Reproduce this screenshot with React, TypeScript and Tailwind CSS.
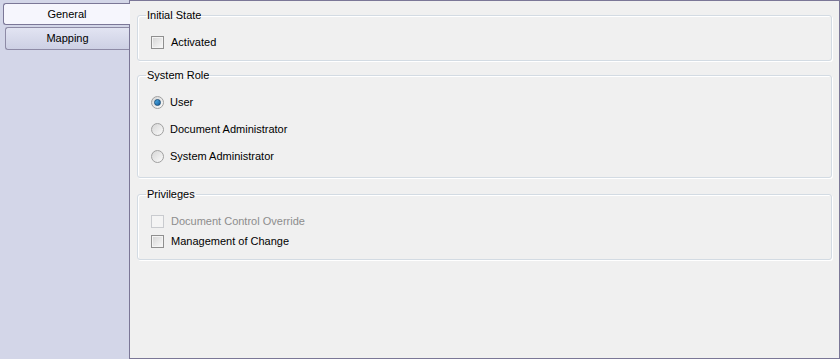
function Checkbox({ disabled = false }: { disabled?: boolean }) {
  return (
    <span
      className={
        disabled
          ? "w-[13px] h-[13px] border border-[#c9cbcf] bg-[#f4f4f4] shrink-0"
          : "w-[13px] h-[13px] border border-[#8f8f8f] bg-gradient-to-br from-[#d4d4d4] to-[#fafafa] shadow-[inset_0_0_0_1px_#f4f4f4] shrink-0"
      }
    />
  );
}

function Radio({ checked = false }: { checked?: boolean }) {
  return (
    <span className="w-[13px] h-[13px] rounded-full border border-[#a0a0a0] bg-gradient-to-br from-[#d6d6d6] to-[#fbfbfb] flex items-center justify-center shrink-0">
      {checked && (
        <span className="w-[7px] h-[7px] rounded-full bg-gradient-to-br from-[#54b2ea] to-[#0f5e9e] border border-[#1b4f7a]" />
      )}
    </span>
  );
}

function Group({
  title,
  className,
  children,
}: {
  title: string;
  className: string;
  children: React.ReactNode;
}) {
  return (
    <fieldset
      className={`border border-[#d3dbe3] rounded-[3px] shadow-[inset_1px_1px_0_#ffffff,1px_1px_0_#ffffff] ${className}`}
    >
      <legend className="ml-[8px] px-[1px] h-[14px] leading-[14px] text-black">
        {title}
      </legend>
      <div className="pl-[13px]">{children}</div>
    </fieldset>
  );
}

export default function App() {
  return (
    <div
      className="flex w-[840px] h-[359px] bg-[#d3d6e8] text-[11px] text-black"
      style={{ fontFamily: '"Liberation Sans", Arial, sans-serif' }}
    >
      <div className="w-[129px] shrink-0 flex flex-col">
        <div className="ml-[3px] mt-[3px] -mr-[1px] relative z-10 h-[22px] rounded-l-[3px] border border-r-0 border-[#7b7797] bg-[#f6f6fd] flex items-center justify-center">
          General
        </div>
        <div className="ml-[5px] mt-[2px] h-[23px] rounded-l-[3px] border border-r-0 border-[#8e8ba6] bg-gradient-to-b from-[#e2e4f2] to-[#cdd0e4] flex items-center justify-center">
          Mapping
        </div>
      </div>
      <div className="flex-1 border border-[#7b7797] bg-[#f0f0f0] pt-[7px] px-[7px] flex flex-col">
        <Group title="Initial State" className="h-[53px]">
          <div className="mt-[12px] h-[16px] flex items-center gap-[7px]">
            <Checkbox />
            <span>Activated</span>
          </div>
        </Group>
        <Group title="System Role" className="mt-[7px] h-[110px]">
          <div className="mt-[12px] flex flex-col gap-[11px]">
            <div className="h-[16px] flex items-center gap-[6px]">
              <Radio checked />
              <span>User</span>
            </div>
            <div className="h-[16px] flex items-center gap-[6px]">
              <Radio />
              <span>Document Administrator</span>
            </div>
            <div className="h-[16px] flex items-center gap-[6px]">
              <Radio />
              <span>System Administrator</span>
            </div>
          </div>
        </Group>
        <Group title="Privileges" className="mt-[9px] h-[73px]">
          <div className="mt-[12px] flex flex-col gap-[4px]">
            <div className="h-[16px] flex items-center gap-[7px]">
              <Checkbox disabled />
              <span className="text-[#8d8d8d]">Document Control Override</span>
            </div>
            <div className="h-[16px] flex items-center gap-[7px]">
              <Checkbox />
              <span>Management of Change</span>
            </div>
          </div>
        </Group>
      </div>
    </div>
  );
}
